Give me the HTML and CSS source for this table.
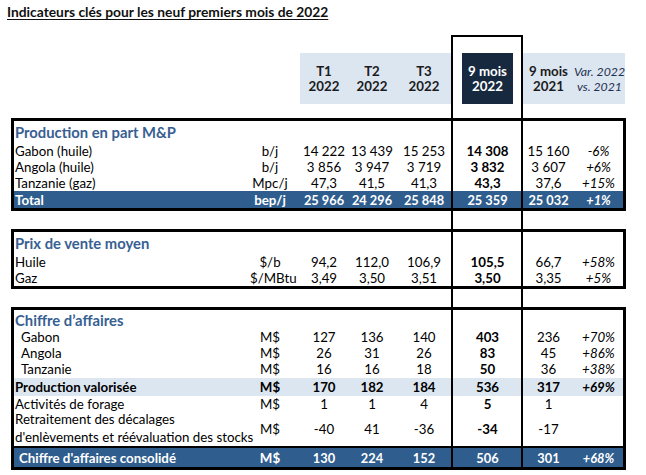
FILE: index.html
```html
<!DOCTYPE html>
<html lang="fr">
<head>
<meta charset="utf-8">
<title>Indicateurs clés</title>
<link rel="stylesheet" href="styles.css">
</head>
<body>
<div class="page">
  <h1 class="title">Indicateurs clés pour les neuf premiers mois de 2022</h1>
  <div class="table">
    <div class="nine-frame"></div>

    <div class="head">
      <div class="hb"></div><div class="hb"></div><div class="hb"></div>
      <div class="hc"><span>T1</span><span>2022</span></div>
      <div class="hc"><span>T2</span><span>2022</span></div>
      <div class="hc"><span>T3</span><span>2022</span></div>
      <div class="hc hc-nine"><div class="dark"><span>9 mois</span><span>2022</span></div></div>
      <div class="hc"><span>9 mois</span><span>2021</span></div>
      <div class="hc hc-var"><span>Var. 2022</span><span>vs. 2021</span></div>
    </div>

    <section class="block">
      <div class="row row-title"><div class="lab sect">Production en part M&amp;P</div></div>
      <div class="row"><div class="lab">Gabon (huile)</div><div class="unit">b/j</div><div></div><div class="c">14 222</div><div class="c">13 439</div><div class="c">15 253</div><div class="c b">14 308</div><div class="c">15 160</div><div class="c i">-6%</div></div>
      <div class="row"><div class="lab">Angola (huile)</div><div class="unit">b/j</div><div></div><div class="c">3 856</div><div class="c">3 947</div><div class="c">3 719</div><div class="c b">3 832</div><div class="c">3 607</div><div class="c i">+6%</div></div>
      <div class="row"><div class="lab">Tanzanie (gaz)</div><div class="unit">Mpc/j</div><div></div><div class="c">47,3</div><div class="c">41,5</div><div class="c">41,3</div><div class="c b">43,3</div><div class="c">37,6</div><div class="c i">+15%</div></div>
      <div class="row row-total"><div class="lab">Total</div><div class="unit">bep/j</div><div></div><div class="c">25 966</div><div class="c">24 296</div><div class="c">25 848</div><div class="c">25 359</div><div class="c">25 032</div><div class="c i">+1%</div></div>
    </section>

    <section class="block">
      <div class="row row-title"><div class="lab sect">Prix de vente moyen</div></div>
      <div class="row"><div class="lab">Huile</div><div class="unit">$/b</div><div></div><div class="c">94,2</div><div class="c">112,0</div><div class="c">106,9</div><div class="c b">105,5</div><div class="c">66,7</div><div class="c i">+58%</div></div>
      <div class="row"><div class="lab">Gaz</div><div class="unit">$/MBtu</div><div></div><div class="c">3,49</div><div class="c">3,50</div><div class="c">3,51</div><div class="c b">3,50</div><div class="c">3,35</div><div class="c i">+5%</div></div>
    </section>

    <section class="block block-last">
      <div class="row row-title short"><div class="lab sect">Chiffre d’affaires</div></div>
      <div class="row"><div class="lab ind">Gabon</div><div class="unit">M$</div><div></div><div class="c">127</div><div class="c">136</div><div class="c">140</div><div class="c b">403</div><div class="c">236</div><div class="c i">+70%</div></div>
      <div class="row"><div class="lab ind">Angola</div><div class="unit">M$</div><div></div><div class="c">26</div><div class="c">31</div><div class="c">26</div><div class="c b">83</div><div class="c">45</div><div class="c i">+86%</div></div>
      <div class="row"><div class="lab ind">Tanzanie</div><div class="unit">M$</div><div></div><div class="c">16</div><div class="c">16</div><div class="c">18</div><div class="c b">50</div><div class="c">36</div><div class="c i">+38%</div></div>
      <div class="row row-sub"><div class="lab">Production valorisée</div><div class="unit">M$</div><div></div><div class="c">170</div><div class="c">182</div><div class="c">184</div><div class="c">536</div><div class="c">317</div><div class="c i">+69%</div></div>
      <div class="row row-short"><div class="lab">Activités de forage</div><div class="unit">M$</div><div></div><div class="c">1</div><div class="c">1</div><div class="c">4</div><div class="c b">5</div><div class="c">1</div><div class="c i"></div></div>
      <div class="row row-two"><div class="lab two">Retraitement des décalages<br>d'enlèvements et réévaluation des stocks</div><div class="unit">M$</div><div></div><div class="c">-40</div><div class="c">41</div><div class="c">-36</div><div class="c b">-34</div><div class="c">-17</div><div class="c i"></div></div>
      <div class="row row-total row-final"><div class="lab ind2">Chiffre d'affaires consolidé</div><div class="unit">M$</div><div></div><div class="c">130</div><div class="c">224</div><div class="c">152</div><div class="c">506</div><div class="c">301</div><div class="c i">+68%</div></div>
    </section>
  </div>
</div>
</body>
</html>
```
FILE: styles.css
```css
:root {
  --cols: 236px 40px 10px 48px 48px 56px 71px 51px 49px;
  --band: #dce6f1;
  --navy: #17293f;
  --blue: #2f5e8e;
  --title-blue: #376092;
}

body {
  margin: 0;
  background: #fff;
  color: #000;
  font-family: Lato, "Open Sans", "Liberation Sans", sans-serif;
  font-size: 13.3px;
}

.page {
  padding: 4px 0 0 7px;
}

.title {
  margin: 0;
  font-size: 13.8px;
  line-height: 16px;
  font-weight: 700;
  text-decoration: underline;
  text-underline-offset: 2px;
  color: #111;
}

.table {
  position: relative;
  margin: 15px 0 0 4px;
  padding-top: 18px;
  width: 615px;
}

.nine-frame {
  position: absolute;
  left: 440px;
  top: 0;
  bottom: 0;
  width: 68px;
  border: 2px solid #000;
  border-bottom: none;
  pointer-events: none;
  z-index: 2;
}

.head {
  display: grid;
  grid-template-columns: var(--cols);
  padding: 0 3px;
  height: 51px;
  font-weight: 700;
  color: #1b1b1b;
}

.hc {
  background: var(--band);
  display: flex;
  flex-direction: column;
  justify-content: center;
  align-items: center;
  line-height: 15px;
  white-space: nowrap;
}

.hc:last-child {
  margin-right: -2px;
}

.hc-nine {
  background: #fff;
  padding: 0 10px;
  align-items: stretch;
}

.dark {
  flex: 1;
  background: var(--navy);
  color: #fff;
  display: flex;
  flex-direction: column;
  justify-content: center;
  align-items: center;
}

.hc-var {
  font-weight: 400;
  font-style: italic;
  font-size: 12.3px;
  color: #1f3050;
}

.block {
  border: 3px solid #000;
  margin-top: 14px;
}

.block + .block {
  margin-top: 18px;
}

.row {
  display: grid;
  grid-template-columns: var(--cols);
  height: 16px;
  align-items: center;
  line-height: 16px;
}

.row-title {
  height: 22px;
}

.row-title.short {
  height: 19px;
}

.sect {
  color: var(--title-blue);
  font-weight: 700;
  font-size: 14.8px;
  grid-column: 1 / -1;
}

.lab {
  padding-left: 1px;
  white-space: nowrap;
}

.lab.ind {
  padding-left: 7px;
}

.lab.ind2 {
  padding-left: 5px;
}

.unit,
.c {
  text-align: center;
  white-space: nowrap;
}

.b {
  font-weight: 700;
}

.i {
  font-style: italic;
}

.row-total {
  height: 17px;
  background: var(--blue);
  color: #fff;
  font-weight: 700;
}

.row-total .c {
  font-size: 12.8px;
}

.row-sub {
  height: 18px;
  background: var(--band);
  font-weight: 700;
  border-top: 1px solid #fff;
}

.row-short {
  height: 15px;
}

.row-two {
  height: 35px;
}

.lab.two {
  line-height: 17.5px;
}

.row-final {
  height: 19px;
  border-top: 2px solid #000;
}
```
